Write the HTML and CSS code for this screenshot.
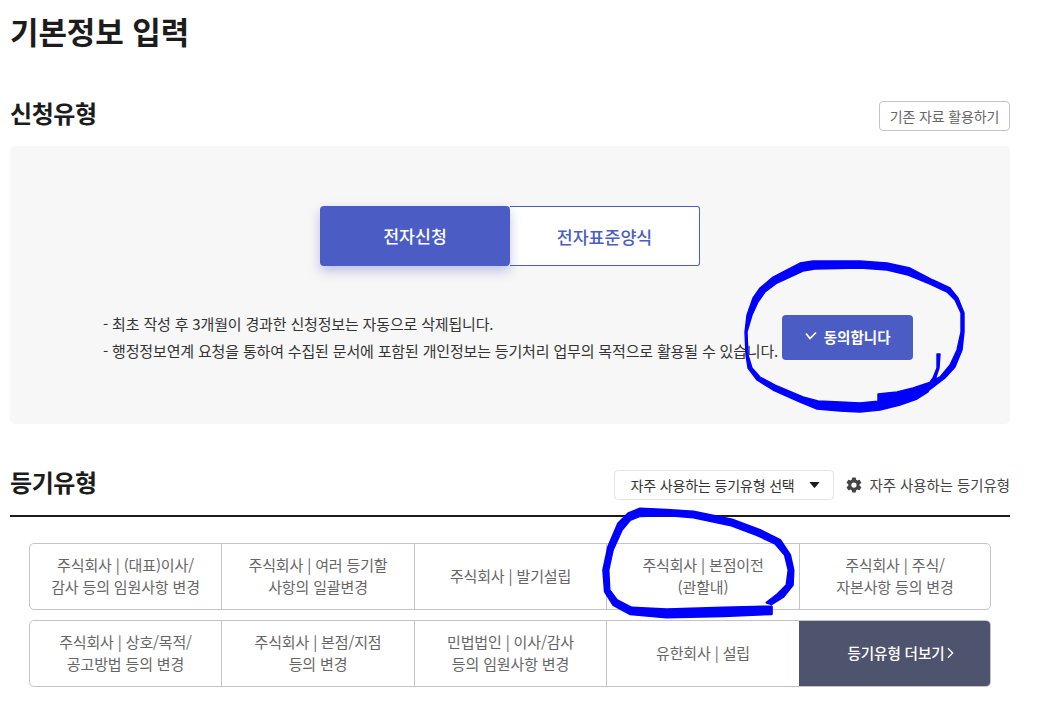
FILE: index.html
```html
<!DOCTYPE html>
<html lang="ko">
<head>
<meta charset="utf-8">
<title>기본정보 입력</title>
<link rel="stylesheet" href="styles.css">
</head>
<body>
<main class="page">
  <h1 class="title">기본정보 입력</h1>

  <div class="section-head first">
    <h2 class="section-title">신청유형</h2>
    <button class="ghost-btn">기존 자료 활용하기</button>
  </div>
  <section class="panel">
    <div class="tabs">
      <button class="tab tab-on">전자신청</button>
      <button class="tab tab-off">전자표준양식</button>
    </div>
    <div class="notice">
      <ul class="notes">
        <li>- 최초 작성 후 3개월이 경과한 신청정보는 자동으로 삭제됩니다.</li>
        <li>- 행정정보연계 요청을 통하여 수집된 문서에 포함된 개인정보는 등기처리 업무의 목적으로 활용될 수 있습니다.</li>
      </ul>
      <button class="agree">
        <svg class="check" viewBox="0 0 12 10" width="12" height="10"><path d="M1 2.5 L5 7.5 L11 1.5" fill="none" stroke="#fff" stroke-width="1.7"/></svg>
        동의합니다
      </button>
    </div>
  </section>

  <div class="section-head second">
    <h2 class="section-title">등기유형</h2>
    <div class="head-tools">
      <button class="select"><span>자주 사용하는 등기유형 선택</span><svg class="caret" viewBox="0 0 10 6" width="11" height="6"><path d="M0.5 0 H9.5 Q10 0 9.7 .6 L5.6 5.6 Q5 6 4.4 5.6 L.3 .6 Q0 0 .5 0 Z" fill="#1c1c1c"/></svg></button>
      <span class="fav">
        <svg class="gear" viewBox="0 0 24 24" width="18" height="18"><path fill="#444" d="M19.4 13c.04-.33.06-.66.06-1s-.02-.67-.06-1l2.1-1.64a.5.5 0 0 0 .12-.64l-2-3.46a.5.5 0 0 0-.61-.22l-2.49 1a7.3 7.3 0 0 0-1.73-1l-.38-2.65A.5.5 0 0 0 13.93 2h-4a.5.5 0 0 0-.49.42l-.38 2.65c-.62.25-1.2.6-1.73 1l-2.49-1a.5.5 0 0 0-.61.22l-2 3.46a.5.5 0 0 0 .12.64L4.45 11c-.04.33-.07.67-.07 1s.03.67.07 1l-2.1 1.64a.5.5 0 0 0-.12.64l2 3.46c.12.22.38.3.61.22l2.49-1c.53.4 1.11.75 1.73 1l.38 2.65c.05.24.25.42.49.42h4c.25 0 .45-.18.49-.42l.38-2.65c.62-.25 1.2-.6 1.73-1l2.49 1c.23.08.49 0 .61-.22l2-3.46a.5.5 0 0 0-.12-.64L19.4 13zM11.93 15.5a3.5 3.5 0 1 1 0-7 3.5 3.5 0 0 1 0 7z"/></svg>
        자주 사용하는 등기유형
      </span>
    </div>
  </div>
  <div class="types">
    <div class="type-row">
      <a class="type">주식회사 | (대표)이사/<br>감사 등의 임원사항 변경</a>
      <a class="type">주식회사 | 여러 등기할<br>사항의 일괄변경</a>
      <a class="type">주식회사 | 발기설립</a>
      <a class="type">주식회사 | 본점이전<br>(관할내)</a>
      <a class="type">주식회사 | 주식/<br>자본사항 등의 변경</a>
    </div>
    <div class="type-row">
      <a class="type">주식회사 | 상호/목적/<br>공고방법 등의 변경</a>
      <a class="type">주식회사 | 본점/지점<br>등의 변경</a>
      <a class="type">민법법인 | 이사/감사<br>등의 임원사항 변경</a>
      <a class="type">유한회사 | 설립</a>
      <a class="type type-more">등기유형 더보기 <svg class="chev" viewBox="0 0 8 14" width="7" height="12"><path d="M1 1.5 L6.5 7 L1 12.5" fill="none" stroke="#fff" stroke-width="1.5"/></svg></a>
    </div>
  </div>
</main>
<svg class="ink" viewBox="0 0 1059 705" width="1059" height="705">
  <path class="ink-a" d="M878 402 L900 400 L925 393 L932 388 L945 378 L955 367 L962 350 L964 332 L964 313 L958 298 L950 288 L933 280 L910 268 L887 263 L860 261 L813 261 L800 263 L773 277 L760 288 L753 298 L747 315 L745 332 L746 355 L748 368 L757 380 L773 390 L800 402 L817 409 L840 411 L860 412 L880 410 L900 405 L917 399 L928 392 L935 380 L939 368 L940 354 L937 354 L937 368 L933 378 L928 385 L915 392 L900 396 L880 401 L860 403 L840 402 L818 401 L803 397 L777 386 L760 377 L752 368 L748 355 L747 332 L752 315 L758 302 L765 292 L777 283 L803 271 L815 269 L860 268 L887 270 L908 275 L930 284 L947 292 L955 300 L961 313 L961 332 L957 350 L950 365 L940 377 L928 383 L913 388 L897 392 L878 394 Z"/>
  <g transform="translate(590 460) scale(0.33333)">
    <path class="ink-b" d="M545 462 L400 468 L230 472 L120 462 L70 435 L45 395 L40 330 L55 260 L85 190 L115 160 L150 146 L230 150 L310 155 L430 180 L510 210 L570 240 L600 285 L610 330 L608 375 L580 410 L545 432 L530 428 L560 405 L590 375 L596 330 L585 285 L555 250 L500 225 L420 195 L310 172 L230 165 L150 168 L120 180 L95 210 L68 270 L55 330 L58 390 L80 420 L125 443 L230 448 L400 443 L530 440 L545 440 Z"/>
  </g>
</svg>
</body>
</html>
```
FILE: styles.css
```css
* { box-sizing: border-box; }
html, body { margin: 0; padding: 0; }
body {
  width: 1059px;
  height: 705px;
  overflow: hidden;
  position: relative;
  background: #fff;
  color: #1c1c1c;
  font-family: "Noto Sans CJK KR", "Noto Sans", sans-serif;
}
button { font-family: inherit; cursor: pointer; }
.page { width: 1010px; padding-left: 10px; }
.title {
  margin: 0;
  padding-top: 8px;
  font-size: 31px;
  line-height: 46px;
  font-weight: 700;
  letter-spacing: -0.1px;
}
.section-head { display: flex; justify-content: space-between; }
.section-head.first { margin-top: 41px; height: 51px; align-items: flex-start; }
.section-title { margin: 0; font-size: 24px; line-height: 36px; font-weight: 700; letter-spacing: -0.4px; }
.ghost-btn {
  width: 131px;
  height: 30px;
  margin-top: 6px;
  padding: 0;
  background: #fff;
  border: 1px solid #c4c4c4;
  border-radius: 4px;
  color: #666;
  font-size: 14px;
  letter-spacing: -0.15px;
}
.panel {
  height: 278px;
  padding-top: 60px;
  background: #f7f7f7;
  border-radius: 5px;
}
.tabs { display: flex; justify-content: center; }
.tab { width: 190px; height: 60px; padding: 0; font-size: 17.3px; font-weight: 500; }
.tab-on {
  position: relative;
  padding-bottom: 2px;
  background: #4b5dc4;
  border: 0;
  border-radius: 4px;
  color: #fff;
  box-shadow: 0 5px 12px rgba(75, 93, 196, .35);
}
.tab-off {
  background: #fff;
  border: 1px solid #4b5dc4;
  border-left: 0;
  border-radius: 0 3px 3px 0;
  color: #4b5dc4;
}
.notice {
  display: flex;
  align-items: center;
  margin-top: 44px;
  padding-left: 93px;
}
.notes { margin: 0; padding: 0; list-style: none; font-size: 15px; line-height: 27px; color: #333; letter-spacing: -0.165px; }
.agree {
  display: flex;
  align-items: center;
  justify-content: center;
  gap: 7px;
  width: 131px;
  height: 45px;
  margin-left: 4px;
  padding: 0 0 2px;
  background: #4b5dc4;
  border: 0;
  border-radius: 4px;
  color: #fff;
  font-size: 14.5px;
  font-weight: 700;
}
.section-head.second {
  margin-top: 38px;
  height: 55px;
  padding-bottom: 8px;
  border-bottom: 2px solid #1c1c1c;
  align-items: center;
}
.section-head.second .section-title { margin-bottom: 6px; }
.head-tools { display: flex; align-items: center; gap: 11px; }
.select {
  display: flex;
  align-items: center;
  justify-content: space-between;
  width: 220px;
  height: 30px;
  padding: 0 13px 0 16px;
  background: #fff;
  border: 1px solid #e4e4e4;
  border-radius: 4px;
  color: #333;
  font-size: 14px;
  letter-spacing: -0.15px;
}
.fav { display: flex; align-items: center; gap: 7px; font-size: 14.4px; color: #444; }
.types { display: flex; flex-direction: column; gap: 10px; margin: 26px 19px 0; }
.type-row {
  display: grid;
  grid-template-columns: 191px 193px 192px 193px 191px;
  height: 67px;
  border: 1px solid #c4c4c4;
  border-radius: 5px;
  overflow: hidden;
}
.type {
  display: flex;
  align-items: center;
  justify-content: center;
  padding-bottom: 2px;
  text-align: center;
  font-size: 15px;
  line-height: 22px;
  letter-spacing: -0.15px;
  color: #666;
  border-left: 1px solid #c4c4c4;
}
.type:first-child { border-left: 0; }
.type-more {
  gap: 3px;
  padding-left: 12px;
  background: #4f546e;
  color: #fff;
  font-size: 14.6px;
  font-weight: 500;
  margin: -1px -1px -1px 0;
  border: 0;
}
.ink { position: absolute; left: 0; top: 0; pointer-events: none; }
.ink path { fill: #0000ff; stroke: #0000ff; stroke-linejoin: round; }
.ink .ink-a { stroke-width: 1.4; }
.ink .ink-b { stroke-width: 7; }
```
